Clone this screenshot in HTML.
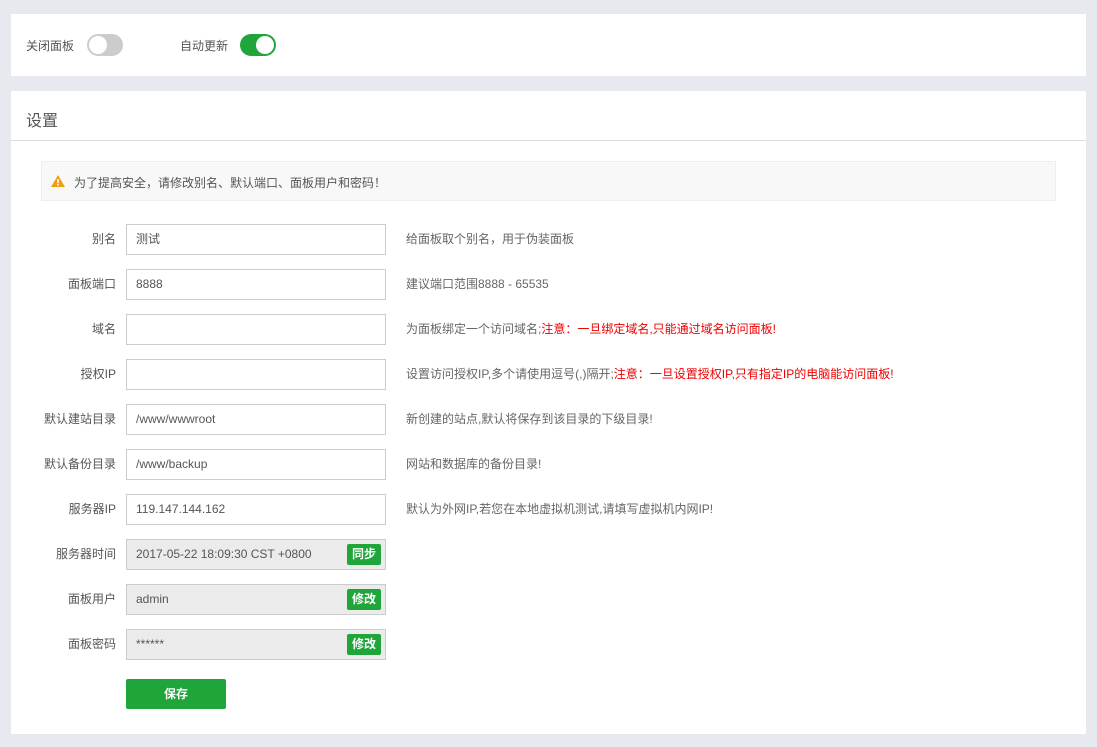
<!DOCTYPE html>
<html><head><meta charset="utf-8"><style>
*{margin:0;padding:0;box-sizing:border-box}
body{width:1097px;height:747px;background:#e6e9ed;font-family:"Liberation Sans","Noto Sans CJK SC",sans-serif;font-size:12px;color:#555;position:relative;overflow:hidden}
.card{position:absolute;left:11px;width:1075px;background:#fff}
.a{position:absolute}
.tog{position:absolute;width:36px;height:22px;border-radius:11px}
.tog i{position:absolute;top:2px;width:18px;height:18px;border-radius:50%;background:#fff}
.lab{position:absolute;right:981px;width:100px;text-align:right;font-size:12px;color:#555;line-height:31px}
.inp{position:absolute;left:126px;width:260px;height:31px;border:1px solid #ccc;padding-left:9px;line-height:29px;font-size:12px;color:#555}
.inp.g{background:#ebebeb}
.btn{position:absolute;right:4px;top:4px;height:21px;width:34px;background:#20a53a;color:#fff;border-radius:2px;font-size:12px;font-weight:bold;text-align:center;line-height:21px}
.help{position:absolute;left:406px;line-height:31px;font-size:12px;color:#666}
.red{color:#e00}
</style></head><body>
<div class="card" style="top:14px;height:62px">
<div class="a" style="left:15px;top:23px;font-size:12px;color:#555">关闭面板</div>
<div class="tog" style="left:76px;top:20px;background:#ccc;border:1px solid #ccc"><i style="left:1px;top:1px"></i></div>
<div class="a" style="left:169px;top:23px;font-size:12px;color:#555">自动更新</div>
<div class="tog" style="left:229px;top:20px;background:#20a53a"><i style="left:16px"></i></div>
</div>
<div class="card" style="top:91px;height:643px">
<div class="a" style="left:15px;top:16px;font-size:16px;color:#555">设置</div>
<div class="a" style="left:0;top:49px;width:1075px;height:1px;background:#ddd"></div>
</div>
<div class="a" style="left:41px;top:161px;width:1015px;height:40px;background:#f8f8f8;border:1px solid #eee"></div>
<svg class="a" style="left:51px;top:175px" width="14" height="12" viewBox="0 0 14 12"><path d="M7 0L14 12H0Z" fill="#f39c12"/><rect x="6.2" y="4" width="1.6" height="4.2" fill="#fff"/><rect x="6.2" y="9" width="1.6" height="1.6" fill="#fff"/></svg>
<div class="a" style="left:74px;top:174px;font-size:12px;color:#555">为了提高安全，请修改别名、默认端口、面板用户和密码！</div>

<div class="lab" style="top:224px">别名</div><div class="inp" style="top:224px">测试</div><div class="help" style="top:224px">给面板取个别名，用于伪装面板</div>
<div class="lab" style="top:269px">面板端口</div><div class="inp" style="top:269px">8888</div><div class="help" style="top:269px">建议端口范围8888 - 65535</div>
<div class="lab" style="top:314px">域名</div><div class="inp" style="top:314px"></div><div class="help" style="top:314px">为面板绑定一个访问域名;<span class="red">注意：一旦绑定域名,只能通过域名访问面板!</span></div>
<div class="lab" style="top:359px">授权IP</div><div class="inp" style="top:359px"></div><div class="help" style="top:359px">设置访问授权IP,多个请使用逗号(,)隔开;<span class="red">注意：一旦设置授权IP,只有指定IP的电脑能访问面板!</span></div>
<div class="lab" style="top:404px">默认建站目录</div><div class="inp" style="top:404px">/www/wwwroot</div><div class="help" style="top:404px">新创建的站点,默认将保存到该目录的下级目录!</div>
<div class="lab" style="top:449px">默认备份目录</div><div class="inp" style="top:449px">/www/backup</div><div class="help" style="top:449px">网站和数据库的备份目录!</div>
<div class="lab" style="top:494px">服务器IP</div><div class="inp" style="top:494px">119.147.144.162</div><div class="help" style="top:494px">默认为外网IP,若您在本地虚拟机测试,请填写虚拟机内网IP!</div>
<div class="lab" style="top:539px">服务器时间</div><div class="inp g" style="top:539px">2017-05-22 18:09:30 CST +0800<div class="btn">同步</div></div>
<div class="lab" style="top:584px">面板用户</div><div class="inp g" style="top:584px">admin<div class="btn">修改</div></div>
<div class="lab" style="top:629px">面板密码</div><div class="inp g" style="top:629px">******<div class="btn">修改</div></div>
<div class="a" style="left:126px;top:679px;width:100px;height:30px;background:#20a53a;border-radius:2px;color:#fff;font-weight:bold;text-align:center;line-height:30px">保存</div>
</body></html>
